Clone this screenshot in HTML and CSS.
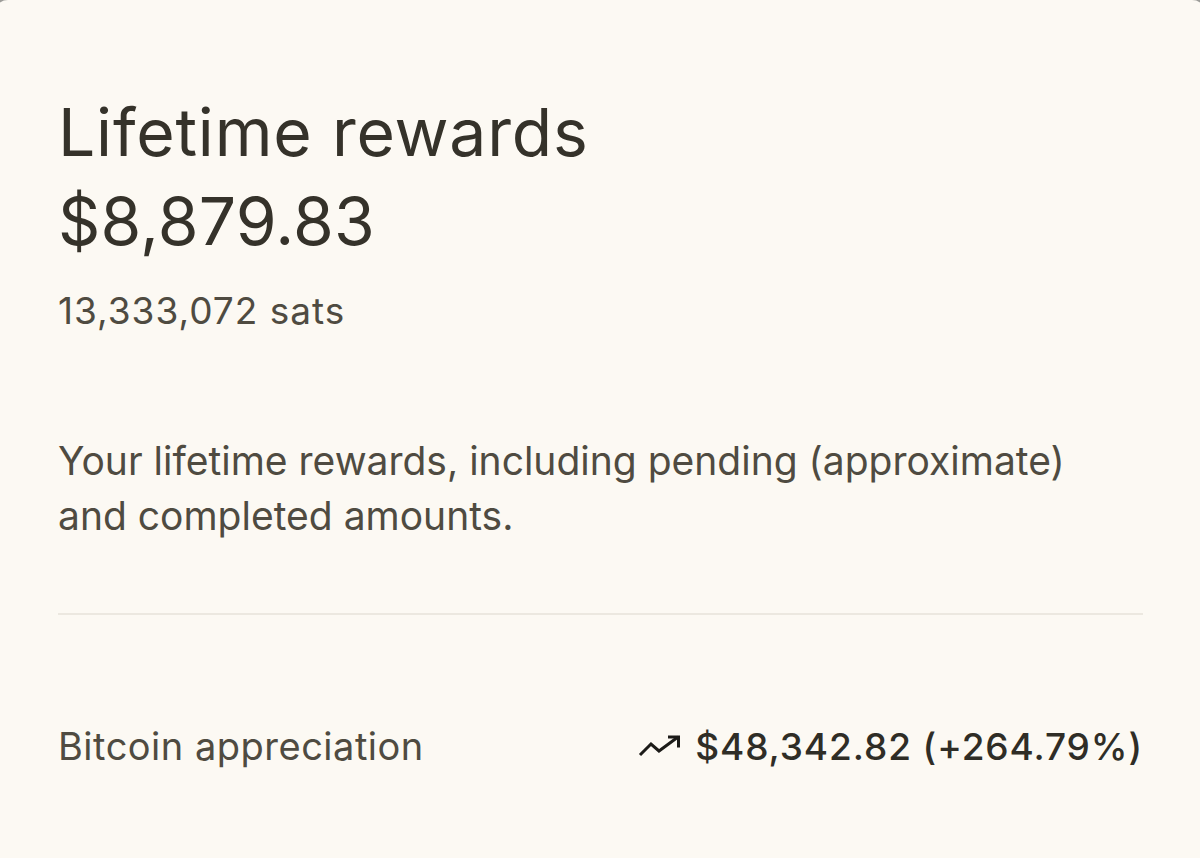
FILE: index.html
```html
<!DOCTYPE html>
<html>
<head>
<meta charset="utf-8">
<link rel="stylesheet" href="styles.css">
</head>
<body>
<div class="card">
  <h1 class="title">Lifetime rewards</h1>
  <div class="amount">$8,879.83</div>
  <div class="sats">13,333,072 sats</div>
  <p class="desc">Your lifetime rewards, including pending (approximate) and completed amounts.</p>
  <div class="divider"></div>
  <div class="row">
    <span class="label">Bitcoin appreciation</span>
    <span class="value">
      <svg class="trend" viewBox="0 0 44 24" width="44" height="24">
        <polyline points="2,21 13,10 21,17 40,3" fill="none" stroke="#1c1b18" stroke-width="3" stroke-linejoin="miter"/>
        <polyline points="30,3 40.5,3 40.5,13.5" fill="none" stroke="#1c1b18" stroke-width="3"/>
      </svg>
      <span>$48,342.82 (+264.79%)</span>
    </span>
  </div>
</div>
</body>
</html>
```
FILE: styles.css
```css
html, body {
  margin: 0;
  padding: 0;
  background: #9d9d99;
  height: 100%;
  overflow: hidden;
}
.card {
  margin: 0 -6px;
  min-height: 900px;
  background: #fcf9f3;
  border-radius: 14px 14px 0 0;
  padding: 0 63px 0 64px;
  font-family: Inter, "Liberation Sans", sans-serif;
  color: #35322a;
}
.title {
  margin: 0;
  padding-top: 92px;
  font-size: 66px;
  letter-spacing: 0.8px;
  font-weight: 400;
  line-height: 80px;
}
.amount {
  font-size: 66px;
  letter-spacing: 0.2px;
  line-height: 80px;
  margin-top: 9px;
}
.sats {
  margin-top: 28px;
  font-size: 37px;
  letter-spacing: 1px;
  line-height: 44px;
  color: #4f4b41;
}
.desc {
  margin: 100px 0 0;
  font-size: 39px;
  line-height: 55px;
  color: #4f4b41;
  max-width: 1030px;
}
.divider {
  margin-top: 70px;
  height: 2px;
  background: #ece8e0;
}
.row {
  margin-top: 108px;
  display: flex;
  justify-content: space-between;
  align-items: center;
}
.label {
  font-size: 38px;
  letter-spacing: 0.5px;
  color: #4f4b41;
}
.value {
  display: flex;
  align-items: center;
  gap: 13px;
  font-size: 37px;
  letter-spacing: 0.9px;
  font-weight: 500;
  color: #2f2d26;
}
.trend {
  display: block;
}
```
